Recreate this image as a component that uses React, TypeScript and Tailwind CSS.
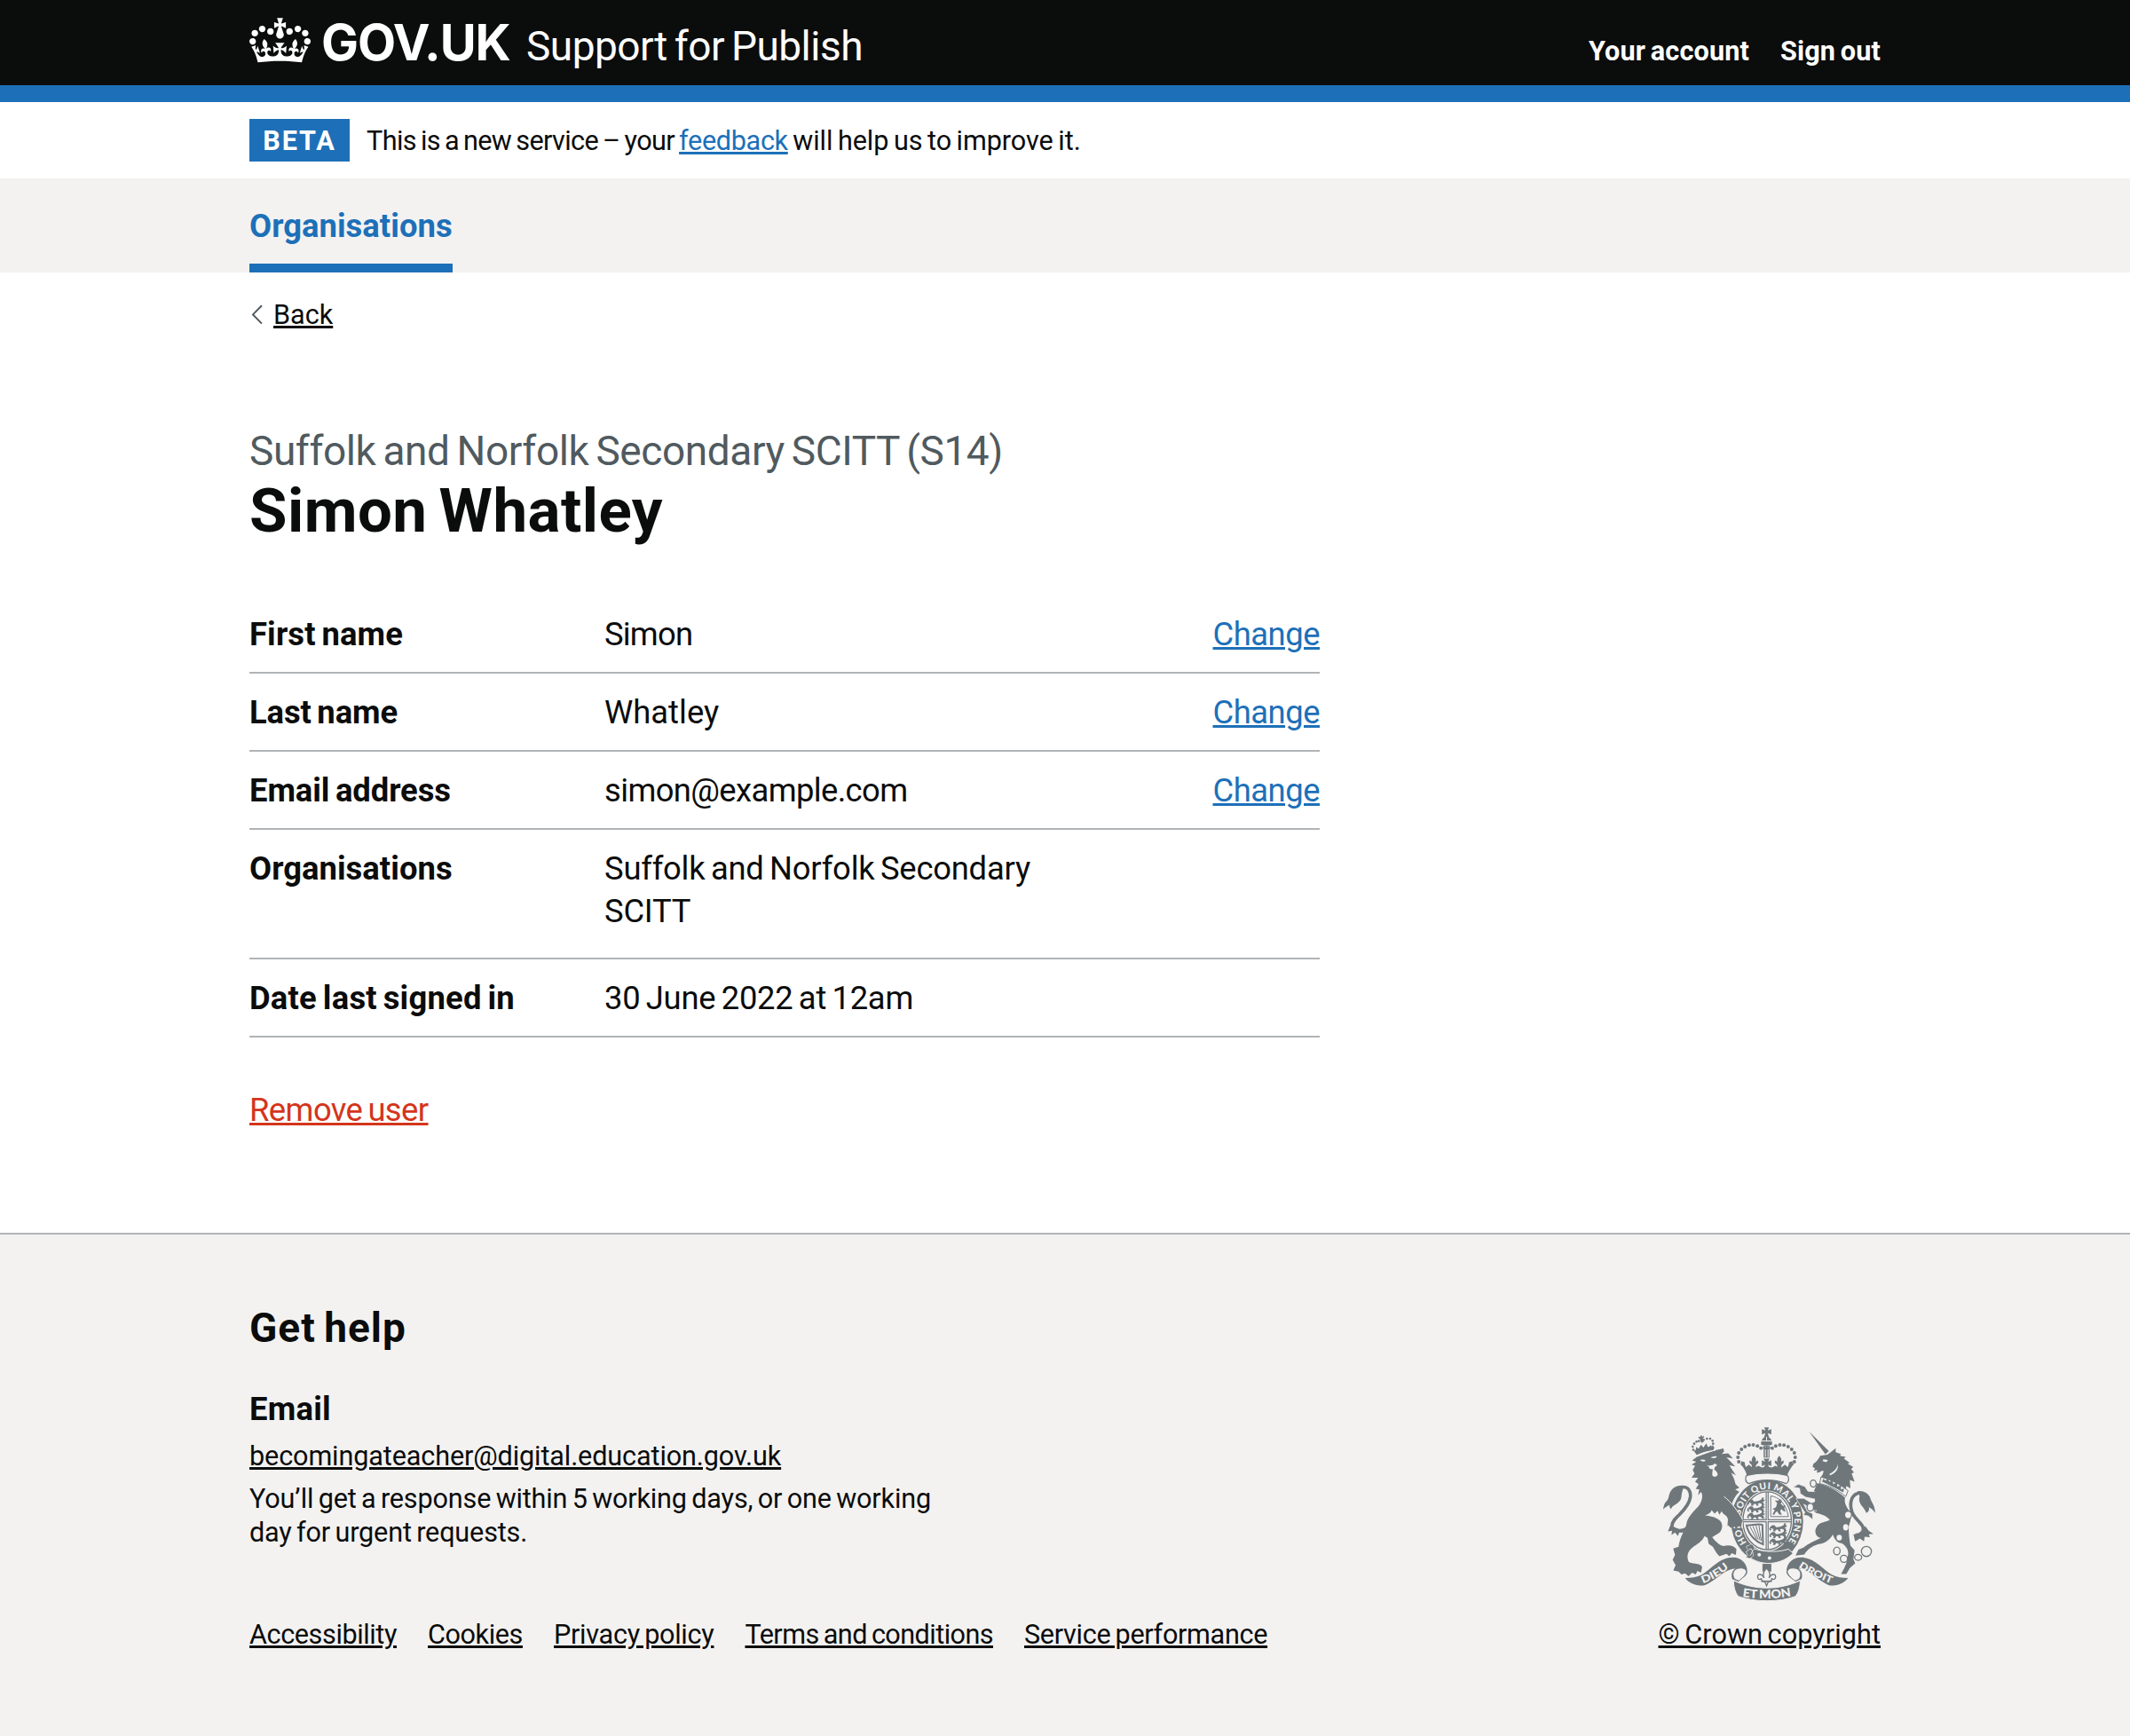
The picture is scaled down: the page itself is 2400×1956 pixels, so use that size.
import React from "react";

function CrownLogo() {
  return (
    <svg viewBox="0 0 132 97" className="h-[51px] w-[69px] shrink-0 translate-y-[3px]" aria-hidden="true">
      <path
        fill="currentColor"
        fillRule="evenodd"
        d="M25 30.2c3.5 1.5 7.7-.2 9.1-3.7 1.5-3.6-.2-7.8-3.9-9.2-3.6-1.4-7.6.3-9.1 3.9-1.4 3.5.3 7.5 3.9 9zM9 39.5c3.6 1.5 7.8-.2 9.2-3.7 1.5-3.6-.2-7.8-3.9-9.1-3.6-1.5-7.6.2-9.1 3.8-1.4 3.5.3 7.5 3.8 9zM4.4 57.2c3.5 1.5 7.7-.2 9.1-3.8 1.5-3.6-.2-7.7-3.9-9.1-3.5-1.5-7.6.3-9.1 3.8-1.4 3.5.3 7.6 3.9 9.1zm38.3-21.4c3.5 1.5 7.7-.2 9.1-3.8 1.5-3.6-.2-7.7-3.9-9.1-3.6-1.5-7.6.3-9.1 3.8-1.3 3.6.4 7.7 3.9 9.1zm64.4-5.6c-3.6 1.5-7.8-.2-9.1-3.7-1.5-3.6.2-7.8 3.8-9.2 3.6-1.4 7.7.3 9.2 3.9 1.3 3.5-.4 7.5-3.9 9zm15.9 9.3c-3.6 1.5-7.7-.2-9.1-3.7-1.5-3.6.2-7.8 3.7-9.1 3.6-1.5 7.7.2 9.2 3.8 1.5 3.5-.3 7.5-3.8 9zm4.7 17.7c-3.6 1.5-7.8-.2-9.2-3.8-1.5-3.6.2-7.7 3.9-9.1 3.6-1.5 7.7.3 9.2 3.8 1.3 3.5-.4 7.6-3.9 9.1zM89.3 35.8c-3.6 1.5-7.8-.2-9.2-3.8-1.4-3.6.2-7.7 3.9-9.1 3.6-1.5 7.7.3 9.2 3.8 1.4 3.6-.3 7.7-3.9 9.1zM69.7 17.7l8.9 4.7V9.3l-8.9 2.8c-.2-.3-.5-.6-.9-.9L72.4 0H59.6l3.5 11.2c-.3.3-.6.5-.9.9l-8.8-2.8v13.1l8.8-4.7c.3.3.6.7.9.9l-5 15.4v.1c-.2.8-.4 1.6-.4 2.4 0 4.1 3.1 7.5 7 8.1h.2c.3 0 .7.1 1 .1.4 0 .7 0 1-.1h.2c4-.6 7.1-4.1 7.1-8.1 0-.8-.1-1.7-.4-2.4V34l-5.1-15.4c.4-.2.7-.6 1-.9zM66 92.8c16.9 0 32.8 1.1 47.1 3.2 4-16.9 8.9-26.7 14-33.5l-9.6-3.4c1 4.9 1.1 7.2 0 10.2-1.5-1.4-3-4.3-4.2-8.7L108.6 76c2.8-2 5-3.2 7.5-3.3-4.4 9.4-10 11.9-13.6 11.2-4.3-.8-6.3-4.6-5.6-7.9 1-4.7 5.7-5.9 8-.5 4.3-8.7-3-11.4-7.6-8.8 7.1-7.2 7.9-13.5 2.1-21.1-8 6.1-8.1 12.3-4.5 20.8-4.7-5.4-12.1-2.5-9.5 6.2 3.4-5.2 7.9-2 7.2 3.1-.6 4.3-6.4 7.8-13.5 7.2-10.3-.9-10.9-8-11.2-13.8 2.5-.5 7.1 1.8 11 7.3L80.2 60c-4.1 4.4-8 5.3-12.3 5.4 1.4-4.4 8-11.6 8-11.6H55.5s6.4 7.2 7.9 11.6c-4.2-.1-8-1-12.3-5.4l1.4 16.4c3.9-5.5 8.5-7.7 10.9-7.3-.3 5.8-.9 12.8-11.1 13.8-7.2.6-12.9-2.9-13.5-7.2-.7-5 3.8-8.3 7.1-3.1 2.7-8.7-4.6-11.6-9.4-6.2 3.7-8.5 3.6-14.7-4.6-20.8-5.8 7.6-5 13.9 2.2 21.1-4.7-2.6-11.9.1-7.7 8.8 2.3-5.5 7.1-4.2 8.1.5.7 3.3-1.3 7.1-5.7 7.9-3.5.7-9-1.8-13.5-11.2 2.5.1 4.7 1.3 7.5 3.3l-4.7-15.4c-1.2 4.4-2.7 7.2-4.3 8.7-1.1-3-.9-5.3 0-10.2l-9.5 3.4c5 6.9 9.9 16.7 14 33.5 14.8-2.1 30.8-3.2 47.7-3.2z"
      />
    </svg>
  );
}

const INK = "#6f777b";
const PAPER = "#f3f2f1";

const crownPearls: [number, number][] = [
  [328, 168], [325, 153], [328, 138], [337, 126], [349, 117], [363, 112], [377, 111], [391, 115], [403, 122],
];
const lionPearls: [number, number][] = [
  [174, 128], [172, 117], [177, 107], [185, 100], [193, 98], [209, 94], [220, 90], [231, 90], [239, 97], [241, 107], [239, 117],
];
const chain: [number, number, number, number][] = [
  [580, 242, 10, 12], [570, 322, 11, 13], [698, 348, 12, 13], [660, 470, 11, 13], [684, 497, 12, 12], [732, 492, 12, 10],
];

/* Three small walking lions, used in two quarters of the shield. */
function Lions({ x, y }: { x: number; y: number }) {
  return (
    <g transform={`translate(${x} ${y})`}>
      {[0, 23, 46].map((dy) => (
        <path
          key={dy}
          transform={`translate(0 ${dy})`}
          d="M0 2l7-6 8 0 5 7 10-1 10-3 6-4 2-6 6 1-2 7 6 0-4 6-6 1 6 3-1 5 5 2-9 2-3-5-6-3-7 2 4 6-8 1-2-6-7 0-3 6-8 0 3-5-4-5-7-1 4 6-6 2-2-7z"
          fill={INK}
        />
      ))}
    </g>
  );
}

function RoyalArms() {
  return (
    <svg viewBox="72 48 718 592" className="h-[197px] w-[239px]" aria-hidden="true" fill={INK}>
      {/* lion tail */}
      <path d="M152 394C128 408 104 400 102 386C101 371 114 359 128 346C148 326 161 306 164 288C166 268 156 252 138 254" fill="none" stroke={INK} strokeWidth="11" />
      <path d="M140 249C120 246 104 256 96 270C90 280 92 290 86 298C82 304 74 308 72 330C80 320 88 318 94 314C92 320 94 324 98 328C104 314 122 312 130 298C136 288 132 276 140 258Z" />
      <path d="M96 384L88 404L102 402L100 416L112 408L122 420L126 408L140 408L152 396L130 398Z" />

      {/* lion body */}
      <path d="M186 152L246 130L276 123L278 134L270 142L292 140L308 157L286 153L302 170L316 184L296 180L306 196L318 214L302 206L312 226L317 244L330 256L316 262L330 270C318 280 308 296 303 316L322 344C334 356 338 376 330 394L322 388L318 398L310 386L302 392L300 380L290 386L292 368C290 348 276 350 270 336L262 348L256 334L246 344L236 332C232 344 222 346 214 350C230 352 248 354 262 366C274 376 274 392 266 404C258 414 244 418 238 424C250 440 264 452 276 454C292 448 312 452 320 464L318 484L304 478L296 488L286 480L262 488L252 476L240 456L226 446L222 426L212 420C204 440 184 448 170 460C152 474 152 492 158 506C166 516 196 508 204 524L200 544L188 538L182 550L170 544L158 556L146 546L134 550L124 540L106 536L114 518L104 500L112 484L106 462L124 456C128 420 150 396 152 372C160 350 178 334 192 318C204 300 208 282 200 270L190 282L194 262L182 260L192 244L180 236L190 222L168 222L178 208L172 196L180 182L168 178L184 168L170 164Z" />
      <path d="M196 162q14-4 20 3q-10 6-20-3zM232 154q10-6 22-4q-4 10-22 4z" fill={PAPER} />
      <path d="M218 178q8 6 14 2q8 2 14-6l8 4q0 6-8 8q2 4-2 8q14 10 12 20q-10 10-18 0q0-10 2-20l-10-2q-2-6-12-14z" fill={PAPER} />

      {/* lion crown */}
      <path d="M176 132C194 122 222 116 246 119L241 130C220 132 200 138 186 146Z" />
      <path d="M182 130l2-12 8 6 8-14 8 10 10-14 6 14 10-8 2 10-28 4z" />
      <path d="M196 90l-6-3 3-4 5 2-1-5 6-1 1 5 5-3 2 4-5 4 3 12-8 3z" />
      {lionPearls.map(([x, y]) => (
        <circle key={`${x}-${y}`} cx={x} cy={y} r="4" />
      ))}
      <path d="M184 148C204 138 224 132 248 130" fill="none" stroke={PAPER} strokeWidth="3" />

      {/* unicorn tail */}
      <path d="M722 416C740 418 754 404 748 389C742 375 722 362 712 340C702 314 706 282 732 275" fill="none" stroke={INK} strokeWidth="11" />
      <path d="M730 268C748 264 766 274 772 288C776 306 788 312 790 342C782 330 776 326 768 322C772 332 766 338 760 342C752 322 738 316 736 300C734 288 742 284 730 276Z" />
      <path d="M756 386L768 402L784 412L768 414L772 424L754 422L752 438L738 428L722 438L716 414L738 414Z" />

      {/* unicorn */}
      <path d="M566 66L633 132L621 143Z" />
      <path d="M604 148L628 144L642 134L656 122L656 136L674 142L670 148L690 152L684 158L704 172L696 174L716 186L708 192L718 204L710 208L720 236L704 230L706 258L692 250L690 264C662 240 640 230 606 222C610 212 616 208 614 198C606 198 598 208 592 204L594 196L582 198L586 190L578 186L580 176C592 168 598 158 604 148Z" />
      <path d="M614 160l16 2-6 8-12-4zM634 210q26-12 30-34q2 28-26 38z" fill={PAPER} />
      <path d="M594 240C620 246 662 264 688 290C684 306 690 318 702 334C712 350 706 370 700 388C700 410 702 430 706 452L720 468L716 498L722 512L704 528L692 548L674 548L684 530L692 512L698 482C700 466 690 452 676 444C662 444 652 432 646 414C640 430 620 444 604 446C582 450 562 462 550 482L520 486L530 466L548 458C562 446 586 436 606 426C588 424 582 402 592 388C602 372 620 374 636 366C626 352 610 346 590 342C578 334 576 326 584 312C594 298 582 284 582 268Z" />
      <path d="M606 220C640 228 672 246 698 266L690 286C664 264 632 248 602 242Z" fill={PAPER} stroke={INK} strokeWidth="3" />
      <path d="M610 236l4-10 8 6 8-8 4 12 10-6 4 14 12-6 2 14 12-4 0 14 10-4-2 14C664 262 632 246 610 236Z" />
      <ellipse cx="690" cy="390" rx="9" ry="11" fill={PAPER} />
      <ellipse cx="668" cy="425" rx="9" ry="10" fill={PAPER} />
      <circle cx="760" cy="472" r="17" fill="none" stroke={INK} strokeWidth="4" />

      {/* garter */}
      <ellipse cx="424" cy="370" rx="126" ry="146" fill={PAPER} />
      <ellipse cx="424" cy="370" rx="122" ry="141" />
      <ellipse cx="424" cy="368" rx="87" ry="103" fill={PAPER} />
      <ellipse cx="424" cy="368" rx="82" ry="98" fill={PAPER} stroke={INK} strokeWidth="4" />
      <path id="motto" d="M355 442A92 109 0 0 1 424 261A92 109 0 0 1 485 452" fill="none" />
      <text fontFamily="Lato" fontWeight="900" fontSize="31" fill={PAPER}>
        <textPath href="#motto" textLength="466" lengthAdjust="spacing">HONI SOIT QUI MAL Y PENSE</textPath>
      </text>

      {/* lion and unicorn forelegs over the garter */}
      <path d="M276 286L304 308L326 342L340 366L336 390L326 384L320 398L312 386L300 392L290 380L292 350Z" />
      <path d="M278 286C302 304 326 336 342 366L337 392" fill="none" stroke={PAPER} strokeWidth="3" />
      <path d="M522 292L548 292L574 308L592 300L590 336L572 326L548 312L560 336L578 344L578 364L564 352L546 348L552 340L536 316Z" stroke={PAPER} strokeWidth="2" />
      <path d="M512 254L530 244L552 252L562 268L596 270L592 296L554 288L536 276L534 258Z" stroke={PAPER} strokeWidth="2" />
      <path d="M586 264L604 264L604 338L586 330Z" />
      {chain.map(([x, y, rx, ry]) => (
        <ellipse key={`${x}-${y}`} cx={x} cy={y} rx={rx} ry={ry} fill={PAPER} stroke={INK} strokeWidth="4" />
      ))}

      {/* shield quarters */}
      <path d="M424 270V466M341 368H507" stroke={INK} strokeWidth="10" />
      <path d="M424 272V464M343 368H505" stroke={PAPER} strokeWidth="3" />
      <Lions x={359} y={300} />
      <Lions x={434} y={387} />
      <path d="M436 284C462 286 488 310 496 354L436 354Z" fill="none" stroke={INK} strokeWidth="3" />
      <path d="M442 346l8-14-8-4 12-6 4-14-8-8 12 0 6-6 6 8-4 8 8 8 8-2-4 8 4 14-8-4-6-6-4 8 6 12-10-2-6-10-6 4-4 8z" />
      <path d="M354 384C376 384 392 376 408 382L410 448C388 440 362 418 354 384Z" fill="none" stroke={INK} strokeWidth="6" />
      <path d="M366 388l22 42M376 386l18 46M386 384l14 50M396 382l8 54" stroke={INK} strokeWidth="3" />

      {/* buckle and strap */}
      <path d="M364 456C392 470 446 480 496 464L512 478C494 496 468 510 436 512C404 514 376 502 360 488Z" stroke={PAPER} strokeWidth="3" />
      <path d="M362 452q-10-2-8 8l8 8-10 4 6 12-6 8 14 4 12-10-4-16 8-8-6-12q-10-8-14 2z" stroke={PAPER} strokeWidth="2" />
      <path d="M364 464q8-4 10 6q-2 10-8 16" fill="none" stroke={PAPER} strokeWidth="3" />
      <circle cx="397" cy="483" r="6" fill={PAPER} />
      <circle cx="432" cy="494" r="6" fill={PAPER} />

      {/* imperial crown */}
      <path d="M355 214C398 204 452 204 492 214C500 222 498 238 488 242C448 226 400 226 362 242C350 238 348 222 355 214Z" fill={PAPER} stroke={INK} strokeWidth="4" />
      <path d="M332 174L346 172L352 186L362 178L372 186L380 190L394 182L406 188L414 186L422 188L432 186L440 188L452 182L466 190L474 186L484 178L494 186L500 172L516 174C506 186 496 200 492 214C448 204 400 204 355 214C352 200 344 186 332 174Z" />
      <path d="M379 148q10 10 6 20l8-4q4 10-6 14l-2 12h-12l-2-12q-10-4-6-14l8 4q-4-10 6-20zM465 148q10 10 6 20l8-4q4 10-6 14l-2 12h-12l-2-12q-10-4-6-14l8 4q-4-10 6-20z" />
      <path d="M412 158h20l-5 10 11-5v20l-11-5 5 12h-20l5-12-11 5v-20l11 5zM336 166l12 4 2 20-14-10zM510 166l-12 4-2 20 14-10z" />
      <path d="M412 114H432V154H412Z" />
      <path d="M418 116V152M427 116V152" stroke={PAPER} strokeWidth="3" />
      <path d="M403 110C403 94 411 84 422 82C433 84 441 94 441 110C430 114 414 114 403 110Z" />
      <path d="M404 98H440M422 84V98" stroke={PAPER} strokeWidth="3" />
      <path d="M414 52H430L426 62L438 58V76L426 71L430 84H414L418 71L406 76V58L418 62Z" />
      <path d="M410 116q12 6 24 0v8q-12 6-24 0z" />
      {crownPearls.map(([x, y]) => (
        <g key={`${x}-${y}`}>
          <circle cx={x} cy={y} r="6" />
          <circle cx={844 - x} cy={y} r="6" />
        </g>
      ))}

      {/* fleur-de-lis pendant */}
      <path d="M408 514H438V540H408Z" />
      <path d="M422 528C436 542 434 554 430 562C438 546 456 546 452 560C450 570 440 568 440 562C440 572 434 574 428 574L422 588L416 574C410 574 404 572 404 562C404 568 394 570 392 560C390 546 406 546 414 562C410 554 408 542 422 528Z" fill={PAPER} stroke={INK} strokeWidth="4" />
      <path d="M404 573H440" stroke={INK} strokeWidth="5" />

      {/* ribbon */}
      <path d="M146 562C166 562 186 560 204 550C234 532 262 492 308 492C340 492 360 518 356 546C350 560 334 564 326 574L306 566C300 550 306 536 316 530C280 530 254 568 214 586C186 592 160 580 146 562Z" />
      <path d="M698 562C678 562 660 560 642 550C612 532 584 492 538 492C506 492 486 518 490 546C496 560 512 564 520 574L540 566C546 550 540 536 530 530C566 530 592 568 632 586C660 592 684 580 698 562Z" />
      <path d="M322 530C338 526 350 528 354 540C352 554 338 562 328 572L314 566C304 552 308 536 322 530ZM524 530C508 526 496 528 492 540C494 554 508 562 518 572L532 566C542 552 538 536 524 530Z" fill={PAPER} stroke={INK} strokeWidth="3" />
      <path d="M310 570C380 604 466 604 536 570C536 592 530 612 520 624C466 644 380 644 326 624C316 612 310 592 310 570Z" stroke={PAPER} strokeWidth="3" />
      <path id="dieu" d="M206 580Q262 560 302 520" fill="none" />
      <path id="droit" d="M530 525Q576 556 650 584" fill="none" />
      <path id="mon" d="M340 625Q422 638 506 623" fill="none" />
      <g fontFamily="Lato" fontWeight="900" fontSize="35" fill={PAPER}>
        <text><textPath href="#dieu" textLength="104" lengthAdjust="spacingAndGlyphs">DIEU</textPath></text>
        <text fontSize="33"><textPath href="#droit" textLength="124" lengthAdjust="spacingAndGlyphs">DROIT</textPath></text>
        <text fontSize="40"><textPath href="#mon" textLength="166" lengthAdjust="spacingAndGlyphs">ET MON</textPath></text>
      </g>
    </svg>
  );
}

const link = "underline decoration-[3px] underline-offset-[2px]";

type Row = { label: string; labelClass: string; value: string; valueClass: string; change?: boolean };

const rows: Row[] = [
  { label: "First name", labelClass: "tracking-[0.14px]", value: "Simon", valueClass: "tracking-[-0.8px]", change: true },
  { label: "Last name", labelClass: "tracking-[-0.09px]", value: "Whatley", valueClass: "tracking-[0px]", change: true },
  { label: "Email address", labelClass: "tracking-[-0.07px]", value: "simon@example.com", valueClass: "tracking-[-0.62px]", change: true },
  { label: "Organisations", labelClass: "tracking-[0.04px]", value: "Suffolk and Norfolk Secondary SCITT", valueClass: "tracking-[-0.22px]" },
  { label: "Date last signed in", labelClass: "tracking-[0.22px]", value: "30 June 2022 at 12am", valueClass: "tracking-[-0.25px]" },
];

export default function App() {
  return (
    <div className="flex min-h-[1956px] flex-col bg-white font-['Roboto',sans-serif] text-[#0b0c0c] [&_*]:[word-spacing:-0.066em]">
      <header className="h-[96px] bg-[#0b0c0c] text-white">
        <div className="mx-auto flex w-[1838px] items-baseline pt-[17px] leading-none">
          <CrownLogo />
          <span className="ml-[12px] w-[212px] font-['Inter',sans-serif] text-[56px] font-bold tracking-[-1.1px]">GOV.UK</span>
          <a className="ml-[19px] text-[46px] tracking-[-0.5px]">Support for Publish</a>
          <nav className="ml-auto flex gap-[35px] text-[30.6px] font-bold tracking-[0.14px]">
            <a>Your account</a>
            <a>Sign out</a>
          </nav>
        </div>
      </header>
      <div className="h-[19px] bg-[#1d70b8]" />

      <div className="mx-auto flex h-[86px] w-[1838px] items-start pt-[19px] text-[30.6px] leading-[48px]">
        <strong className="flex h-[48px] w-[113px] justify-center bg-[#1d70b8] pt-px font-bold tracking-[1.9px] text-white">BETA</strong>
        <p className="ml-[19px] pt-px">
          <span className="tracking-[-0.6px]">This is a new service – your </span>
          <a className={`${link} tracking-[-0.33px] text-[#1d70b8]`}>feedback</a>
          <span className="tracking-[-0.05px]"> will help us to improve it.</span>
        </p>
      </div>

      <nav className="h-[106px] bg-[#f3f2f1]">
        <div className="mx-auto flex w-[1838px]">
          <a className="h-[106px] border-b-[10px] border-[#1d70b8] pt-[10px] text-[36.4px] leading-[87px] font-bold tracking-[0.04px] text-[#1d70b8]">
            Organisations
          </a>
        </div>
      </nav>

      <main className="mx-auto w-[1838px]">
        <div className="mt-[28px] flex h-[39px] items-center text-[30.6px] leading-[39px]">
          <svg viewBox="0 0 27 39" className="h-[39px] w-[27px]" fill="none" stroke="#505a5f" strokeWidth="2">
            <path d="M14 9.2L4 19.4L14 29.6" />
          </svg>
          <a className={link}>Back</a>
        </div>

        <h1 className="mt-[104px] text-[69px] leading-[76px] font-bold tracking-[0.47px]">
          <span className="block text-[46px] leading-[60px] font-normal tracking-[-0.41px] text-[#505a5f]">
            Suffolk and Norfolk Secondary SCITT (S14)
          </span>
          Simon Whatley
        </h1>

        <dl className="mt-[57px] w-[1206px] text-[36.4px] leading-[48px]">
          {rows.map((row) => (
            <div
              key={row.label}
              className={`flex border-b-2 border-[#b1b4b6] pt-[20px] ${row.label === "Organisations" ? "pb-[28px]" : "pb-[18px]"}`}
            >
              <dt className={`w-[400px] shrink-0 font-bold ${row.labelClass}`}>{row.label}</dt>
              <dd className={`w-[520px] ${row.valueClass}`}>{row.value}</dd>
              {row.change && (
                <dd className="ml-auto">
                  <a className={`${link} tracking-[-0.48px] text-[#1d70b8]`}>Change</a>
                </dd>
              )}
            </div>
          ))}
        </dl>

        <p className="mt-[58px] text-[36.4px] leading-[48px]">
          <a className={`${link} tracking-[-0.58px] text-[#d4351c]`}>Remove user</a>
        </p>
      </main>

      <footer className="mt-[114px] grow border-t-2 border-[#b1b4b6] bg-[#f3f2f1] pt-[76px] text-[30.6px] leading-[38.4px]">
        <div className="mx-auto flex w-[1838px] items-end justify-between">
          <div>
            <h2 className="text-[46px] leading-[58px] font-bold tracking-[1px]">Get help</h2>
            <h3 className="mt-[39px] text-[36.4px] leading-[48px] font-bold tracking-[0.25px]">Email</h3>
            <p className="mt-[9.5px]">
              <a className={`${link} tracking-[-0.12px]`}>becomingateacher@digital.education.gov.uk</a>
            </p>
            <p className="mt-[10px] w-[790px] tracking-[-0.16px]">
              You’ll get a response within 5 working days, or one working day for urgent requests.
            </p>
            <ul className="mt-[76.5px] flex gap-[35px]">
              <li><a className={`${link} tracking-[-0.4px]`}>Accessibility</a></li>
              <li><a className={`${link} tracking-[-0.4px]`}>Cookies</a></li>
              <li><a className={`${link} tracking-[-0.28px]`}>Privacy policy</a></li>
              <li><a className={`${link} tracking-[-0.55px]`}>Terms and conditions</a></li>
              <li><a className={`${link} tracking-[-0.32px]`}>Service performance</a></li>
            </ul>
          </div>
          <div className="flex flex-col items-end">
            <div className="mr-[6px] mb-[19px]">
              <RoyalArms />
            </div>
            <a className={`${link} tracking-[0.07px]`}>© Crown copyright</a>
          </div>
        </div>
      </footer>
    </div>
  );
}
